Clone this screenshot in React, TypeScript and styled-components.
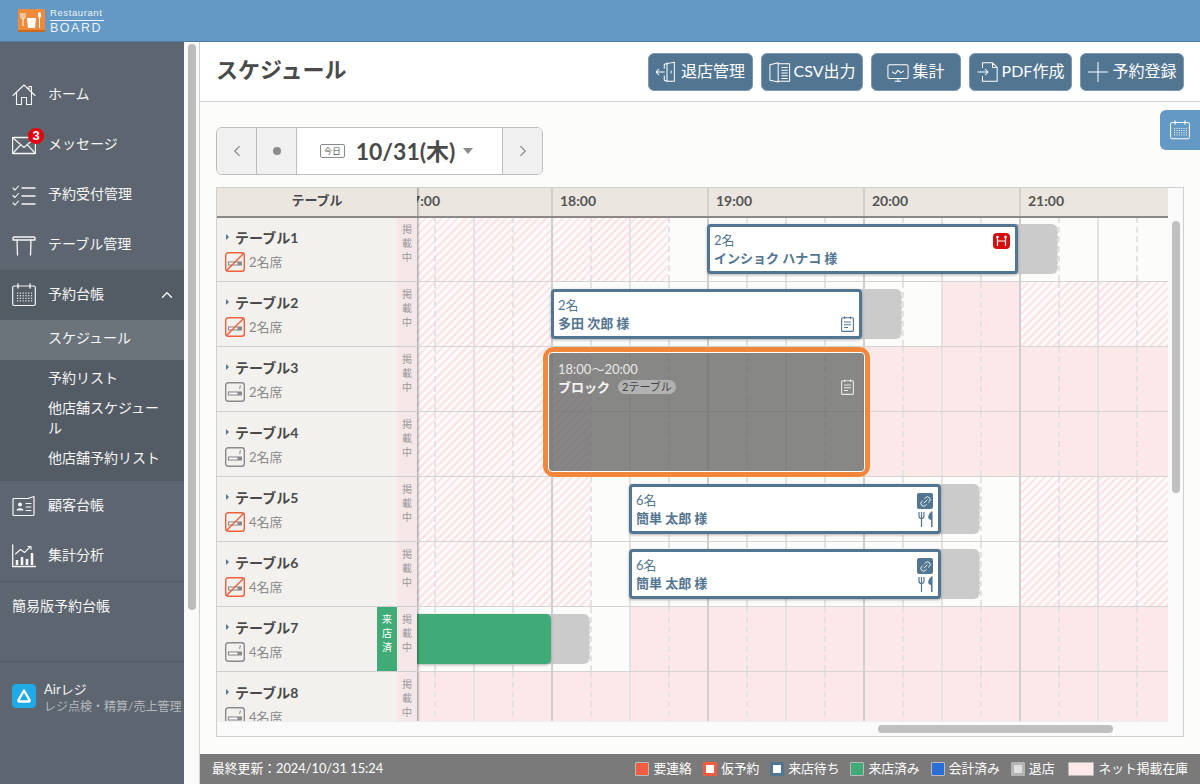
import React from "react";
import styled, { createGlobalStyle } from "styled-components";
import { ChevronLeft, ChevronRight, ChevronUp, Link2 } from "lucide-react";

const FONT = `Lato, "Noto Sans CJK JP", sans-serif`;

const GlobalStyle = createGlobalStyle`
  html, body { margin: 0; padding: 0; background: #fff; }
  body { font-family: ${FONT}; color: #4a4a4a; }
  * { box-sizing: border-box; }
`;

const Page = styled.div`
  width: 1200px;
  height: 784px;
  display: flex;
  flex-direction: column;
  overflow: hidden;
`;

const TopBar = styled.header`
  flex: 0 0 42px;
  background: #6399c4;
  border-bottom: 1px solid #4f7c9f;
  display: flex;
  align-items: center;
  padding: 0 0 0 18px;
  gap: 5px;
`;

const LogoText = styled.div`
  display: flex;
  flex-direction: column;
  width: 54px;
  color: #edf3f8;
  font-family: "Liberation Sans", sans-serif;
`;

const LogoSmall = styled.span`
  font-size: 9.5px;
  line-height: 11px;
  letter-spacing: 0.6px;
  border-bottom: 1px solid #edf3f8;
  padding-bottom: 2px;
  white-space: nowrap;
`;

const LogoBig = styled.span`
  font-size: 12.5px;
  line-height: 14px;
  letter-spacing: 1.5px;
  white-space: nowrap;
`;

const Body = styled.div`
  flex: 1;
  display: flex;
  min-height: 0;
`;

const Sidebar = styled.nav`
  flex: 0 0 184px;
  background: #5d6670;
  padding-top: 28px;
  color: #f6f6f6;
  font-size: 14px;
`;

const MenuItem = styled.div<{ $open?: boolean }>`
  height: 50px;
  display: flex;
  align-items: center;
  gap: 12px;
  padding: 0 12px;
  background: ${(p) => (p.$open ? "#535b64" : "transparent")};
  position: relative;

  svg.menu-icon {
    flex: 0 0 24px;
  }
`;

const MenuLabel = styled.span`
  flex: 1;
  position: relative;
  top: -2px;
`;

const MenuChevron = styled(ChevronUp)`
  margin-right: -4px;
`;

const Badge = styled.span`
  position: absolute;
  left: 28px;
  top: 8px;
  width: 16px;
  height: 16px;
  border-radius: 50%;
  background: #e8000f;
  color: #fff;
  font-size: 13px;
  font-weight: 700;
  line-height: 16px;
  text-align: center;
  font-family: "Liberation Sans", sans-serif;
`;

const SubMenu = styled.div`
  background: #535b64;
  padding-bottom: 1px;
`;

const SubItem = styled.div<{ $active?: boolean }>`
  min-height: 40px;
  padding: 0 22px 0 48px;
  display: flex;
  align-items: center;
  line-height: 20px;
  background: ${(p) => (p.$active ? "#6b747b" : "transparent")};
`;

const SubLabel = styled.span`
  position: relative;
  top: -2px;
`;

const PlainLink = styled.div`
  height: 81px;
  border-top: 1px solid #525a63;
  border-bottom: 1px solid #525a63;
  padding: 14px 12px 0;
  line-height: 20px;
`;

const AirBlock = styled.div`
  display: flex;
  gap: 8px;
  padding: 22px 0 0 12px;
`;

const AirText = styled.div`
  display: flex;
  flex-direction: column;
  font-size: 13px;
  line-height: 17px;
  white-space: nowrap;
  margin-top: -3px;
`;

const AirSub = styled.span`
  font-size: 12px;
  color: #b4b8bc;
`;

const Rail = styled.div`
  flex: 0 0 16px;
  background: #fafafa;
  border-right: 1px solid #d0d0d0;
  padding: 2px 0 0 4px;
`;

const RailThumb = styled.div`
  width: 8px;
  height: 566px;
  border-radius: 4px;
  background: #bdbdbd;
`;

const Main = styled.main`
  flex: 1;
  min-width: 0;
  display: flex;
  flex-direction: column;
  background: #fcfcfa;
  position: relative;
`;

const TitleBar = styled.div`
  flex: 0 0 60px;
  background: #fff;
  border-bottom: 1px solid #cfcfcf;
  display: flex;
  align-items: center;
  justify-content: space-between;
  padding: 0 16px;
`;

const Title = styled.h1`
  margin: 0 0 3px;
  font-size: 22px;
  line-height: 30px;
  font-weight: 700;
  color: #4a4a4a;
`;

const Actions = styled.div`
  display: flex;
  gap: 8px;
`;

const ActionButton = styled.button<{ $w: number }>`
  width: ${(p) => p.$w}px;
  height: 38px;
  background: #527591;
  border: 1px solid #7e99ae;
  border-radius: 6px;
  color: #fff;
  font: 16px ${FONT};
  display: flex;
  align-items: center;
  justify-content: center;
  gap: 3px;
  padding: 0 0 3px;

  svg {
    flex: 0 0 22px;
    margin-top: 3px;
  }
`;

const CalendarTab = styled.div`
  position: absolute;
  right: 0;
  top: 68px;
  width: 40px;
  height: 40px;
  background: #6399c4;
  border-radius: 6px 0 0 6px;
  display: flex;
  align-items: center;
  justify-content: center;
  color: #fff;
`;

const Content = styled.div`
  flex: 1;
  min-height: 0;
  display: flex;
  flex-direction: column;
  padding: 25px 16px 17px;
  gap: 12px;
`;

const DateNav = styled.div`
  flex: 0 0 48px;
  width: 327px;
  display: flex;
  border: 1px solid #bdbdbd;
  border-radius: 6px;
  overflow: hidden;
  background: #fff;
`;

const NavCell = styled.div`
  flex: 0 0 40px;
  background: #f0f0f0;
  border-right: 1px solid #bdbdbd;
  display: flex;
  align-items: center;
  justify-content: center;
  color: #888;

  &:last-child {
    border-right: 0;
    border-left: 1px solid #bdbdbd;
  }
`;

const Dot = styled.span`
  width: 8px;
  height: 8px;
  border-radius: 50%;
  background: #8a8a8a;
`;

const DateCenter = styled.div`
  flex: 1;
  display: flex;
  align-items: center;
  justify-content: center;
  gap: 11px;
  padding-right: 6px;
`;

const TodayTag = styled.span`
  width: 25px;
  height: 14px;
  border: 1px solid #8a8a8a;
  border-radius: 2px;
  font-size: 8.5px;
  line-height: 12px;
  text-align: center;
  color: #555;
`;

const DateText = styled.span`
  font-size: 23px;
  font-weight: 700;
  color: #4a4a4a;
  margin-bottom: 3px;
`;

const Caret = styled.span`
  width: 0;
  height: 0;
  border-left: 5.5px solid transparent;
  border-right: 5.5px solid transparent;
  border-top: 6px solid #8a8a8a;
  margin-left: -3px;
`;

const Frame = styled.div`
  flex: 1;
  min-height: 0;
  border: 1px solid #cfcfcf;
  display: flex;
  background: #fcfcfa;
`;

const TableArea = styled.div`
  flex: 1;
  min-width: 0;
  display: flex;
  flex-direction: column;
`;

const HeaderRow = styled.div`
  flex: 0 0 30px;
  display: flex;
  background: #ebe7e0;
  border-bottom: 2px solid #8b8885;
  position: relative;
  z-index: 6;
`;

const FrozenShade = styled.div`
  position: absolute;
  right: -3px;
  top: 0;
  bottom: 0;
  width: 3px;
  background: linear-gradient(90deg, rgba(0, 0, 0, 0.32), rgba(0, 0, 0, 0));
`;

const HeaderLabel = styled.div`
  flex: 0 0 200px;
  background: #ebe7e0;
  text-align: center;
  font-size: 13px;
  font-weight: 700;
  line-height: 25px;
  color: #4a4a4a;
  position: relative;
  z-index: 1;
`;

const HourTrack = styled.div`
  flex: 1;
  display: flex;
  overflow: hidden;
`;

const HourCell = styled.div`
  flex: 0 0 156px;
  border-left: 2px solid #d2cfca;
  padding-left: 7px;
  font-size: 14px;
  font-weight: 700;
  line-height: 25px;
  color: #555;

  &:first-child {
    margin-left: -22px;
  }
`;

const Rows = styled.div`
  flex: 1;
  min-height: 0;
  margin-top: -1px;
  overflow: hidden;
`;

const Row = styled.div<{ $raised?: boolean }>`
  height: 65px;
  display: flex;
  position: relative;
  z-index: ${(p) => (p.$raised ? 2 : 1)};
`;

const TableCell = styled.div`
  flex: 0 0 200px;
  display: flex;
  background: #f3f1ed;
  border-bottom: 1px solid #cfcfcf;
  position: relative;
  z-index: 5;
`;

const TableInfo = styled.div`
  flex: 1;
  min-width: 0;
  padding: 10px 0 0 8px;
  display: flex;
  flex-direction: column;
  gap: 5px;
`;

const TableName = styled.div`
  display: flex;
  align-items: center;
  gap: 6px;
  height: 20px;
  padding-left: 1px;
  font-size: 14px;
  font-weight: 700;
  color: #4a4a4a;
`;

const Arrow = styled.span`
  width: 0;
  height: 0;
  border-left: 3px solid #527591;
  border-top: 3px solid transparent;
  border-bottom: 3px solid transparent;
`;

const Seats = styled.div`
  display: flex;
  align-items: center;
  gap: 4px;
  height: 20px;
  font-size: 13px;
  color: #8a8a8a;
`;

const SeatLabel = styled.span`
  margin-bottom: 2px;
`;

const VisitedTag = styled.div`
  flex: 0 0 20px;
  background: #41ab77;
  color: #fff;
  font-size: 10px;
  line-height: 14px;
  padding-top: 5px;
  text-align: center;
`;

const PublishTag = styled.div`
  flex: 0 0 20px;
  background: #f5e6e8;
  color: #999;
  font-size: 10px;
  line-height: 14px;
  padding-top: 5px;
  text-align: center;
`;

const Track = styled.div`
  flex: 1;
  min-width: 0;
  display: flex;
  position: relative;
  border-bottom: 1px solid #d4d4d4;
`;

const Segment = styled.div<{ $kind: string; $w: number }>`
  flex: 0 0 ${(p) => p.$w}px;
  background: ${(p) =>
    p.$kind === "hatch"
      ? "repeating-linear-gradient(135deg, #fbe6e8 0 2.6px, #fdfbfa 2.6px 5.7px)"
      : p.$kind === "pink"
      ? "#fce7e9"
      : "#fcfcfa"};
`;

const TickOverlay = styled.div`
  position: absolute;
  inset: 0;
  display: flex;
  overflow: hidden;
  padding-left: 17px;
`;

const Tick = styled.div<{ $kind: number }>`
  flex: 0 0 39px;
  border-left: 2px ${(p) => (p.$kind % 2 === 1 ? "solid" : "dashed")}
    ${(p) => (p.$kind === 3 ? "#cfcfcf" : "#e4e3e1")};
`;

const Tail = styled.div<{ $left: number; $width: number }>`
  position: absolute;
  left: ${(p) => p.$left}px;
  width: ${(p) => p.$width}px;
  top: 7px;
  height: 50px;
  background: #cbcbcb;
  border-radius: 0 6px 6px 0;
  border-right: 1px dashed #e6e6e6;
`;

const Card = styled.div<{ $left: number; $width: number }>`
  position: absolute;
  left: ${(p) => p.$left}px;
  width: ${(p) => p.$width}px;
  top: 7px;
  height: 50px;
  background: #fff;
  border: 3px solid #527591;
  border-radius: 4px;
  box-shadow: 0 1px 3px rgba(0, 0, 0, 0.3);
  padding: 4px 5px 4px 4px;
  display: flex;
  justify-content: space-between;
  color: #527591;
`;

const CardText = styled.div`
  font-size: 13px;
  line-height: 18px;
`;

const CardName = styled.div`
  font-size: 13px;
  font-weight: 700;
`;

const CardIcons = styled.div<{ $end?: boolean }>`
  display: flex;
  flex-direction: column;
  align-items: flex-end;
  gap: 2px;
  align-self: ${(p) => (p.$end ? "flex-end" : "flex-start")};
  margin-top: ${(p) => (p.$end ? 0 : 2)}px;
`;

const LinkBadge = styled.span`
  width: 16px;
  height: 16px;
  border-radius: 2px;
  background: #527591;
  color: #fff;
  display: flex;
  align-items: center;
  justify-content: center;
`;

const VisitedBar = styled.div`
  position: absolute;
  left: 0;
  top: 7px;
  width: 134px;
  height: 50px;
  background: #41ab77;
  border-radius: 0 5px 5px 0;
  box-shadow: 0 1px 3px rgba(0, 0, 0, 0.3);
`;

const Block = styled.div`
  position: absolute;
  left: 126px;
  top: 0;
  width: 327px;
  height: 130px;
  border: 5px solid #f2873a;
  border-radius: 11px;
  z-index: 3;
`;

const BlockInner = styled.div`
  height: 100%;
  border: 1px solid #fff;
  border-radius: 4px;
  background: rgba(105, 105, 105, 0.8);
  padding: 7px 10px 0 9px;
  display: flex;
  justify-content: space-between;
  color: #e8e8e8;
  font-size: 13px;
  line-height: 18px;
`;

const BlockName = styled.div`
  display: flex;
  align-items: center;
  gap: 8px;
  font-weight: 700;
  color: #f4f4f4;
`;

const Pill = styled.span`
  height: 14px;
  padding: 0 4px;
  border-radius: 7px;
  background: #b2b2b2;
  color: #444;
  font-size: 11px;
  font-weight: 400;
  line-height: 14px;
`;

const BlockIcon = styled.div`
  margin-top: 19px;
`;

const HRail = styled.div`
  flex: 0 0 15px;
  background: #fafafa;
  border-top: 1px solid #eee;
  padding: 3px 0 0 661px;
  position: relative;
  z-index: 6;
`;

const HThumb = styled.div`
  width: 235px;
  height: 8px;
  border-radius: 4px;
  background: #c0c0c0;
`;

const VRail = styled.div`
  flex: 0 0 15px;
  background: #fafafa;
  padding: 33px 0 0 4px;
`;

const VThumb = styled.div`
  width: 8px;
  height: 272px;
  border-radius: 4px;
  background: #c0c0c0;
`;

const Footer = styled.footer`
  flex: 0 0 30px;
  background: #7a7a7a;
  color: #fff;
  font-size: 12.8px;
  display: flex;
  align-items: center;
  justify-content: space-between;
  padding: 0 12px 3px;
`;

const Legend = styled.div`
  display: flex;
  align-items: center;
  gap: 11px;
`;

const LegendItem = styled.div<{ $gap?: number }>`
  display: flex;
  align-items: center;
  gap: 4px;
  margin-left: ${(p) => p.$gap ?? 0}px;
`;

const Swatch = styled.span<{ $fill: string; $edge: string; $thick?: boolean; $wide?: boolean }>`
  width: ${(p) => (p.$wide ? 26 : 14)}px;
  height: 14px;
  margin-top: 3px;
  border-radius: 1px;
  background: ${(p) => p.$fill};
  border: ${(p) => (p.$thick ? "3px" : "1px")} solid ${(p) => p.$edge};
`;

type IconProps = { size?: number };

const Line = ({ size = 24, children }: IconProps & { children: React.ReactNode }) => (
  <svg
    className="menu-icon"
    width={size}
    height={size}
    viewBox="0 0 24 24"
    fill="none"
    stroke="currentColor"
    strokeWidth={1.1}
    strokeLinecap="round"
    strokeLinejoin="round"
  >
    {children}
  </svg>
);

const HomeIcon = () => (
  <Line>
    <path d="M1 12.5 12 2l11 10.500M17 7V3.500h2.500V9.500" />
    <path d="M4.500 10v11.500h5V14.500h5v7h5V10" />
  </Line>
);

const MailIcon = () => (
  <Line>
    <rect x="0.500" y="4.500" width="23" height="16" rx="0.500" strokeWidth={1.4} />
    <path d="M1 5l11 9.500L23 5M1 20l8-8.500M23 20l-8-8.500" />
  </Line>
);

const CheckIcon = () => (
  <Line>
    <path d="M1 5l2 2 3.500-4M1 12.500l2 2 3.500-4M1 20l2 2 3.500-4" />
    <path d="M10 5h13M10 13h13M10 21h13" strokeWidth={1.3} />
  </Line>
);

const TableIcon = () => (
  <Line>
    <path d="M2 4h20a1 1 0 0 1 1 1v2H1V5a1 1 0 0 1 1-1z" strokeWidth={1.3} />
    <path d="M5 7l.500 15M19 7l-.500 15" strokeWidth={1.3} />
  </Line>
);

const dots: number[][] = [];
for (let r = 0; r < 4; r++) for (let c = 0; c < 6; c++) dots.push([5 + c * 2.8, 9.500 + r * 2.6]);

const CalendarIcon = ({ size = 24 }: IconProps) => (
  <Line size={size}>
    <rect x="0.700" y="3" width="22.600" height="19.500" rx="1.500" strokeWidth={1.2} />
    <path d="M6 1v4M18 1v4" strokeWidth={1.4} />
    {dots.map(([x, y]) => (
      <rect key={`${x}-${y}`} x={x} y={y} width="1.200" height="1.200" fill="currentColor" stroke="none" />
    ))}
  </Line>
);

const CustomerIcon = () => (
  <Line>
    <path d="M1.500 4.500H16l6-2v18a1 1 0 0 1-1 1H2a1 1 0 0 1-1-1V5z" strokeWidth={1.2} />
    <circle cx="8" cy="10.500" r="2" fill="currentColor" stroke="none" />
    <path d="M4.500 16.500c0-3 7-3 7 0z" fill="currentColor" stroke="none" />
    <path d="M14 9.500h5M14 13h5M14 16.500h5" />
  </Line>
);

const ChartIcon = () => (
  <Line>
    <path d="M.700 1v21.500H24" strokeWidth={1.3} />
    <path d="M5 21v-5M10 21v-8M15 21v-6M20 21V9" strokeWidth={2.500} strokeLinecap="butt" />
    <path d="M3.500 10l5-4.500 4 3 6-6M16 2.500h3v3" />
  </Line>
);

const FoodLogo = () => (
  <svg width="27" height="23" viewBox="0 0 27 23">
    <rect width="27" height="23" fill="#ef8a3a" />
    <rect y="21" width="27" height="2" fill="#c66a22" />
    <path d="M5 4v13M3 4v4c0 1 1 2 2 2s2-1 2-2V4" stroke="#fff" fill="none" />
    <path d="M9 9h9l-1 10H10z" fill="#fff" />
    <ellipse cx="21.500" cy="6" rx="1.500" ry="3" fill="#fff" />
    <path d="M21.500 8v11" stroke="#fff" />
  </svg>
);

const DoorOut = () => (
  <Line size={22}>
    <path d="M9 8V3.500L19 1.500h1V22h-8l-3-1v-5" />
    <path d="M12 1.800V22M16.500 11v2" />
    <path d="M0 12h9M3 9l-3 3 3 3" />
  </Line>
);

const SheetIcon = () => (
  <Line size={22}>
    <path d="M1 4l9-2v21l-9-2zM10 3h12.500v19H10" />
    <path d="M14 7h6M14 10h6M14 13h6M14 16h6M14 19h6" />
  </Line>
);

const MonitorIcon = () => (
  <Line size={22}>
    <rect x="1" y="4" width="22" height="15" rx="1.500" />
    <path d="M9 22h6M12 19v3M6 12l3 2 3-4 3 3 3-2" />
  </Line>
);

const PdfIcon = () => (
  <Line size={22}>
    <path d="M6 7V2h11l5 5v15H6v-5M17 2v5h5" />
    <path d="M1 12h11M9 9l3 3-3 3" />
  </Line>
);

const PlusIcon = () => (
  <svg width="22" height="22" viewBox="0 0 24 24" stroke="currentColor" strokeWidth={1.1}>
    <path d="M1 12h22M12 1v22" />
  </svg>
);

const NoteIcon = () => (
  <svg width="13" height="16" viewBox="0 0 13 16" fill="none" stroke="currentColor" strokeWidth={1.1}>
    <rect x="0.600" y="1.800" width="11.800" height="13.600" rx="1" />
    <path d="M3.500 0.500v2.500M9.500 0.500v2.500" />
    <path d="M3 6h7M3 8.800h7M3 11.500h4" />
  </svg>
);

const ForkKnife = () => (
  <svg width="15" height="16" viewBox="0 0 15 16" fill="none" stroke="currentColor" strokeWidth={1.2}>
    <path d="M1 1v4c0 1.500 1 2.500 2.500 2.500S6 6.500 6 5V1M3.500 1v15" />
    <path d="M13.800 16V.500" strokeWidth={1.5} />
    <path d="M14 .500c-2.500 1-3.800 3.500-3.800 6 0 1 1 2.500 3.800 2.500z" fill="currentColor" stroke="none" />
  </svg>
);

const RedBadge = () => (
  <svg width="17" height="16" viewBox="0 0 17 16">
    <rect width="17" height="16" rx="4" fill="#d40f0f" />
    <path d="M4.500 3v10M12.500 3v10M4.500 8h8" stroke="#fff" strokeWidth={1.2} />
    <circle cx="4.500" cy="4" r="1.300" fill="#fff" />
    <circle cx="12.500" cy="4" r="1.300" fill="#fff" />
  </svg>
);

const SeatIcon = ({ banned }: { banned?: boolean }) => {
  const edge = banned ? "#f0603f" : "#8a8a8a";
  return (
    <svg width="20" height="20" viewBox="0 0 20 20" fill="none">
      <rect x="0.700" y="0.700" width="18.600" height="18.600" rx="2.500" stroke={edge} strokeWidth={1.4} />
      <rect x="3.500" y="10" width="9.500" height="3" fill="#fff" stroke="#8a8a8a" strokeWidth={1.1} />
      <rect x="13" y="9.500" width="4" height="4" fill="#8a8a8a" />
      {banned ? (
        <path d="M1 19 19 1" stroke={edge} strokeWidth={1.4} />
      ) : (
        <path d="M15 3.500c1 1-1 2 0 3.500" stroke="#8a8a8a" strokeWidth={1.1} />
      )}
    </svg>
  );
};

const AirLogo = () => (
  <svg width="24" height="24" viewBox="0 0 24 24" fill="none">
    <rect width="24" height="24" rx="4" fill="#1fa9e6" />
    <path d="M12 6.500 6.500 16a1 1 0 0 0 .900 1.500h9.200a1 1 0 0 0 .900-1.500z" stroke="#fff" strokeWidth={2.400} strokeLinejoin="round" />
  </svg>
);

type Seg = [string, number];

const RESERVED_LEFT: Seg[] = [["hatch", 173], ["plain", 429], ["hatch", 149]];
const BLOCKED: Seg[] = [["hatch", 173], ["plain", 273], ["pink", 305]];

const TABLES: { name: string; seats: string; banned?: boolean; segs: Seg[]; visited?: boolean }[] = [
  { name: "テーブル1", seats: "2名席", banned: true, segs: [["hatch", 251], ["plain", 500]] },
  { name: "テーブル2", seats: "2名席", banned: true, segs: [["hatch", 134], ["plain", 390], ["pink", 78], ["hatch", 149]] },
  { name: "テーブル3", seats: "2名席", segs: BLOCKED },
  { name: "テーブル4", seats: "2名席", segs: BLOCKED },
  { name: "テーブル5", seats: "4名席", banned: true, segs: RESERVED_LEFT },
  { name: "テーブル6", seats: "4名席", banned: true, segs: RESERVED_LEFT },
  { name: "テーブル7", seats: "4名席", visited: true, segs: [["plain", 212], ["pink", 539]] },
  { name: "テーブル8", seats: "4名席", segs: [["pink", 751]] },
];

// 0 dashed, 1 light solid, 2 dashed, 3 hour line
const TICK_KINDS = Array.from({ length: 20 }, (_, i) => i % 4);

const Reservation = ({
  left,
  width,
  tail,
  count,
  name,
  children,
  end,
}: {
  left: number;
  width: number;
  tail: number;
  count: string;
  name: string;
  children: React.ReactNode;
  end?: boolean;
}) => (
  <>
    <Tail $left={left + width - 4} $width={tail + 4} />
    <Card $left={left} $width={width}>
      <CardText>
        {count}
        <CardName>{name}</CardName>
      </CardText>
      <CardIcons $end={end}>{children}</CardIcons>
    </Card>
  </>
);

const LinkedIcons = () => (
  <>
    <LinkBadge>
      <Link2 size={13} strokeWidth={1.6} style={{ transform: "rotate(-45deg)" }} />
    </LinkBadge>
    <ForkKnife />
  </>
);

const rowContent = (index: number) => {
  switch (index) {
    case 0:
      return (
        <Reservation left={290} width={311} tail={40} count="2名" name="インショク ハナコ 様">
          <RedBadge />
        </Reservation>
      );
    case 1:
      return (
        <Reservation left={134} width={311} tail={40} count="2名" name="多田 次郎 様" end>
          <NoteIcon />
        </Reservation>
      );
    case 2:
      return (
        <Block>
          <BlockInner>
            <div>
              18:00〜20:00
              <BlockName>
                ブロック <Pill>2テーブル</Pill>
              </BlockName>
            </div>
            <BlockIcon>
              <NoteIcon />
            </BlockIcon>
          </BlockInner>
        </Block>
      );
    case 4:
    case 5:
      return (
        <Reservation left={212} width={312} tail={39} count="6名" name="簡単 太郎 様">
          <LinkedIcons />
        </Reservation>
      );
    case 6:
      return (
        <>
          <Tail $left={130} $width={43} />
          <VisitedBar />
        </>
      );
    default:
      return null;
  }
};

export default function App() {
  return (
    <Page>
      <GlobalStyle />
      <TopBar>
        <FoodLogo />
        <LogoText>
          <LogoSmall>Restaurant</LogoSmall>
          <LogoBig>BOARD</LogoBig>
        </LogoText>
      </TopBar>
      <Body>
        <Sidebar>
          <MenuItem>
            <HomeIcon />
            <MenuLabel>ホーム</MenuLabel>
          </MenuItem>
          <MenuItem>
            <MailIcon />
            <Badge>3</Badge>
            <MenuLabel>メッセージ</MenuLabel>
          </MenuItem>
          <MenuItem>
            <CheckIcon />
            <MenuLabel>予約受付管理</MenuLabel>
          </MenuItem>
          <MenuItem>
            <TableIcon />
            <MenuLabel>テーブル管理</MenuLabel>
          </MenuItem>
          <MenuItem $open>
            <CalendarIcon />
            <MenuLabel>予約台帳</MenuLabel>
            <MenuChevron size={18} strokeWidth={1.8} />
          </MenuItem>
          <SubMenu>
            <SubItem $active>
              <SubLabel>スケジュール</SubLabel>
            </SubItem>
            <SubItem>
              <SubLabel>予約リスト</SubLabel>
            </SubItem>
            <SubItem>
              <SubLabel>他店舗スケジュール</SubLabel>
            </SubItem>
            <SubItem>
              <SubLabel>他店舗予約リスト</SubLabel>
            </SubItem>
          </SubMenu>
          <MenuItem>
            <CustomerIcon />
            <MenuLabel>顧客台帳</MenuLabel>
          </MenuItem>
          <MenuItem>
            <ChartIcon />
            <MenuLabel>集計分析</MenuLabel>
          </MenuItem>
          <PlainLink>簡易版予約台帳</PlainLink>
          <AirBlock>
            <AirLogo />
            <AirText>
              Airレジ
              <AirSub>レジ点検・精算/売上管理</AirSub>
            </AirText>
          </AirBlock>
        </Sidebar>
        <Rail>
          <RailThumb />
        </Rail>
        <Main>
          <TitleBar>
            <Title>スケジュール</Title>
            <Actions>
              <ActionButton $w={105}>
                <DoorOut />
                退店管理
              </ActionButton>
              <ActionButton $w={102}>
                <SheetIcon />
                CSV出力
              </ActionButton>
              <ActionButton $w={90}>
                <MonitorIcon />
                集計
              </ActionButton>
              <ActionButton $w={103}>
                <PdfIcon />
                PDF作成
              </ActionButton>
              <ActionButton $w={104}>
                <PlusIcon />
                予約登録
              </ActionButton>
            </Actions>
          </TitleBar>
          <CalendarTab>
            <CalendarIcon size={20} />
          </CalendarTab>
          <Content>
            <DateNav>
              <NavCell>
                <ChevronLeft size={18} strokeWidth={1.5} />
              </NavCell>
              <NavCell>
                <Dot />
              </NavCell>
              <DateCenter>
                <TodayTag>今日</TodayTag>
                <DateText>10/31(木)</DateText>
                <Caret />
              </DateCenter>
              <NavCell>
                <ChevronRight size={18} strokeWidth={1.5} />
              </NavCell>
            </DateNav>
            <Frame>
              <TableArea>
                <HeaderRow>
                  <HeaderLabel>
                    テーブル
                    <FrozenShade />
                  </HeaderLabel>
                  <HourTrack>
                    {["17:00", "18:00", "19:00", "20:00", "21:00"].map((h) => (
                      <HourCell key={h}>{h}</HourCell>
                    ))}
                  </HourTrack>
                </HeaderRow>
                <Rows>
                  {TABLES.map((t, i) => (
                    <Row key={t.name} $raised={i === 2}>
                      <TableCell>
                        <TableInfo>
                          <TableName>
                            <Arrow />
                            {t.name}
                          </TableName>
                          <Seats>
                            <SeatIcon banned={t.banned} />
                            <SeatLabel>{t.seats}</SeatLabel>
                          </Seats>
                        </TableInfo>
                        {t.visited && (
                          <VisitedTag>
                            来<br />店<br />済
                          </VisitedTag>
                        )}
                        <PublishTag>
                          掲<br />載<br />中
                        </PublishTag>
                        <FrozenShade />
                      </TableCell>
                      <Track>
                        {t.segs.map(([kind, w], k) => (
                          <Segment key={k} $kind={kind} $w={w} />
                        ))}
                        <TickOverlay>
                          {TICK_KINDS.map((kind, k) => (
                            <Tick key={k} $kind={kind} />
                          ))}
                        </TickOverlay>
                        {rowContent(i)}
                      </Track>
                    </Row>
                  ))}
                </Rows>
                <HRail>
                  <HThumb />
                </HRail>
              </TableArea>
              <VRail>
                <VThumb />
              </VRail>
            </Frame>
          </Content>
          <Footer>
            <span>最終更新：2024/10/31 15:24</span>
            <Legend>
              <LegendItem>
                <Swatch $fill="#f25c40" $edge="#b9b9b9" />
                要連絡
              </LegendItem>
              <LegendItem>
                <Swatch $fill="#fff" $edge="#f25c40" $thick />
                仮予約
              </LegendItem>
              <LegendItem>
                <Swatch $fill="#fff" $edge="#527591" $thick />
                来店待ち
              </LegendItem>
              <LegendItem>
                <Swatch $fill="#41ab77" $edge="#b9b9b9" />
                来店済み
              </LegendItem>
              <LegendItem>
                <Swatch $fill="#2a6fd6" $edge="#b9b9b9" />
                会計済み
              </LegendItem>
              <LegendItem>
                <Swatch $fill="#e0e0e0" $edge="#b4b4b4" $thick />
                退店
              </LegendItem>
              <LegendItem $gap={3}>
                <Swatch $fill="#fde8ea" $edge="#b9b9b9" $wide />
                ネット掲載在庫
              </LegendItem>
            </Legend>
          </Footer>
        </Main>
      </Body>
    </Page>
  );
}
